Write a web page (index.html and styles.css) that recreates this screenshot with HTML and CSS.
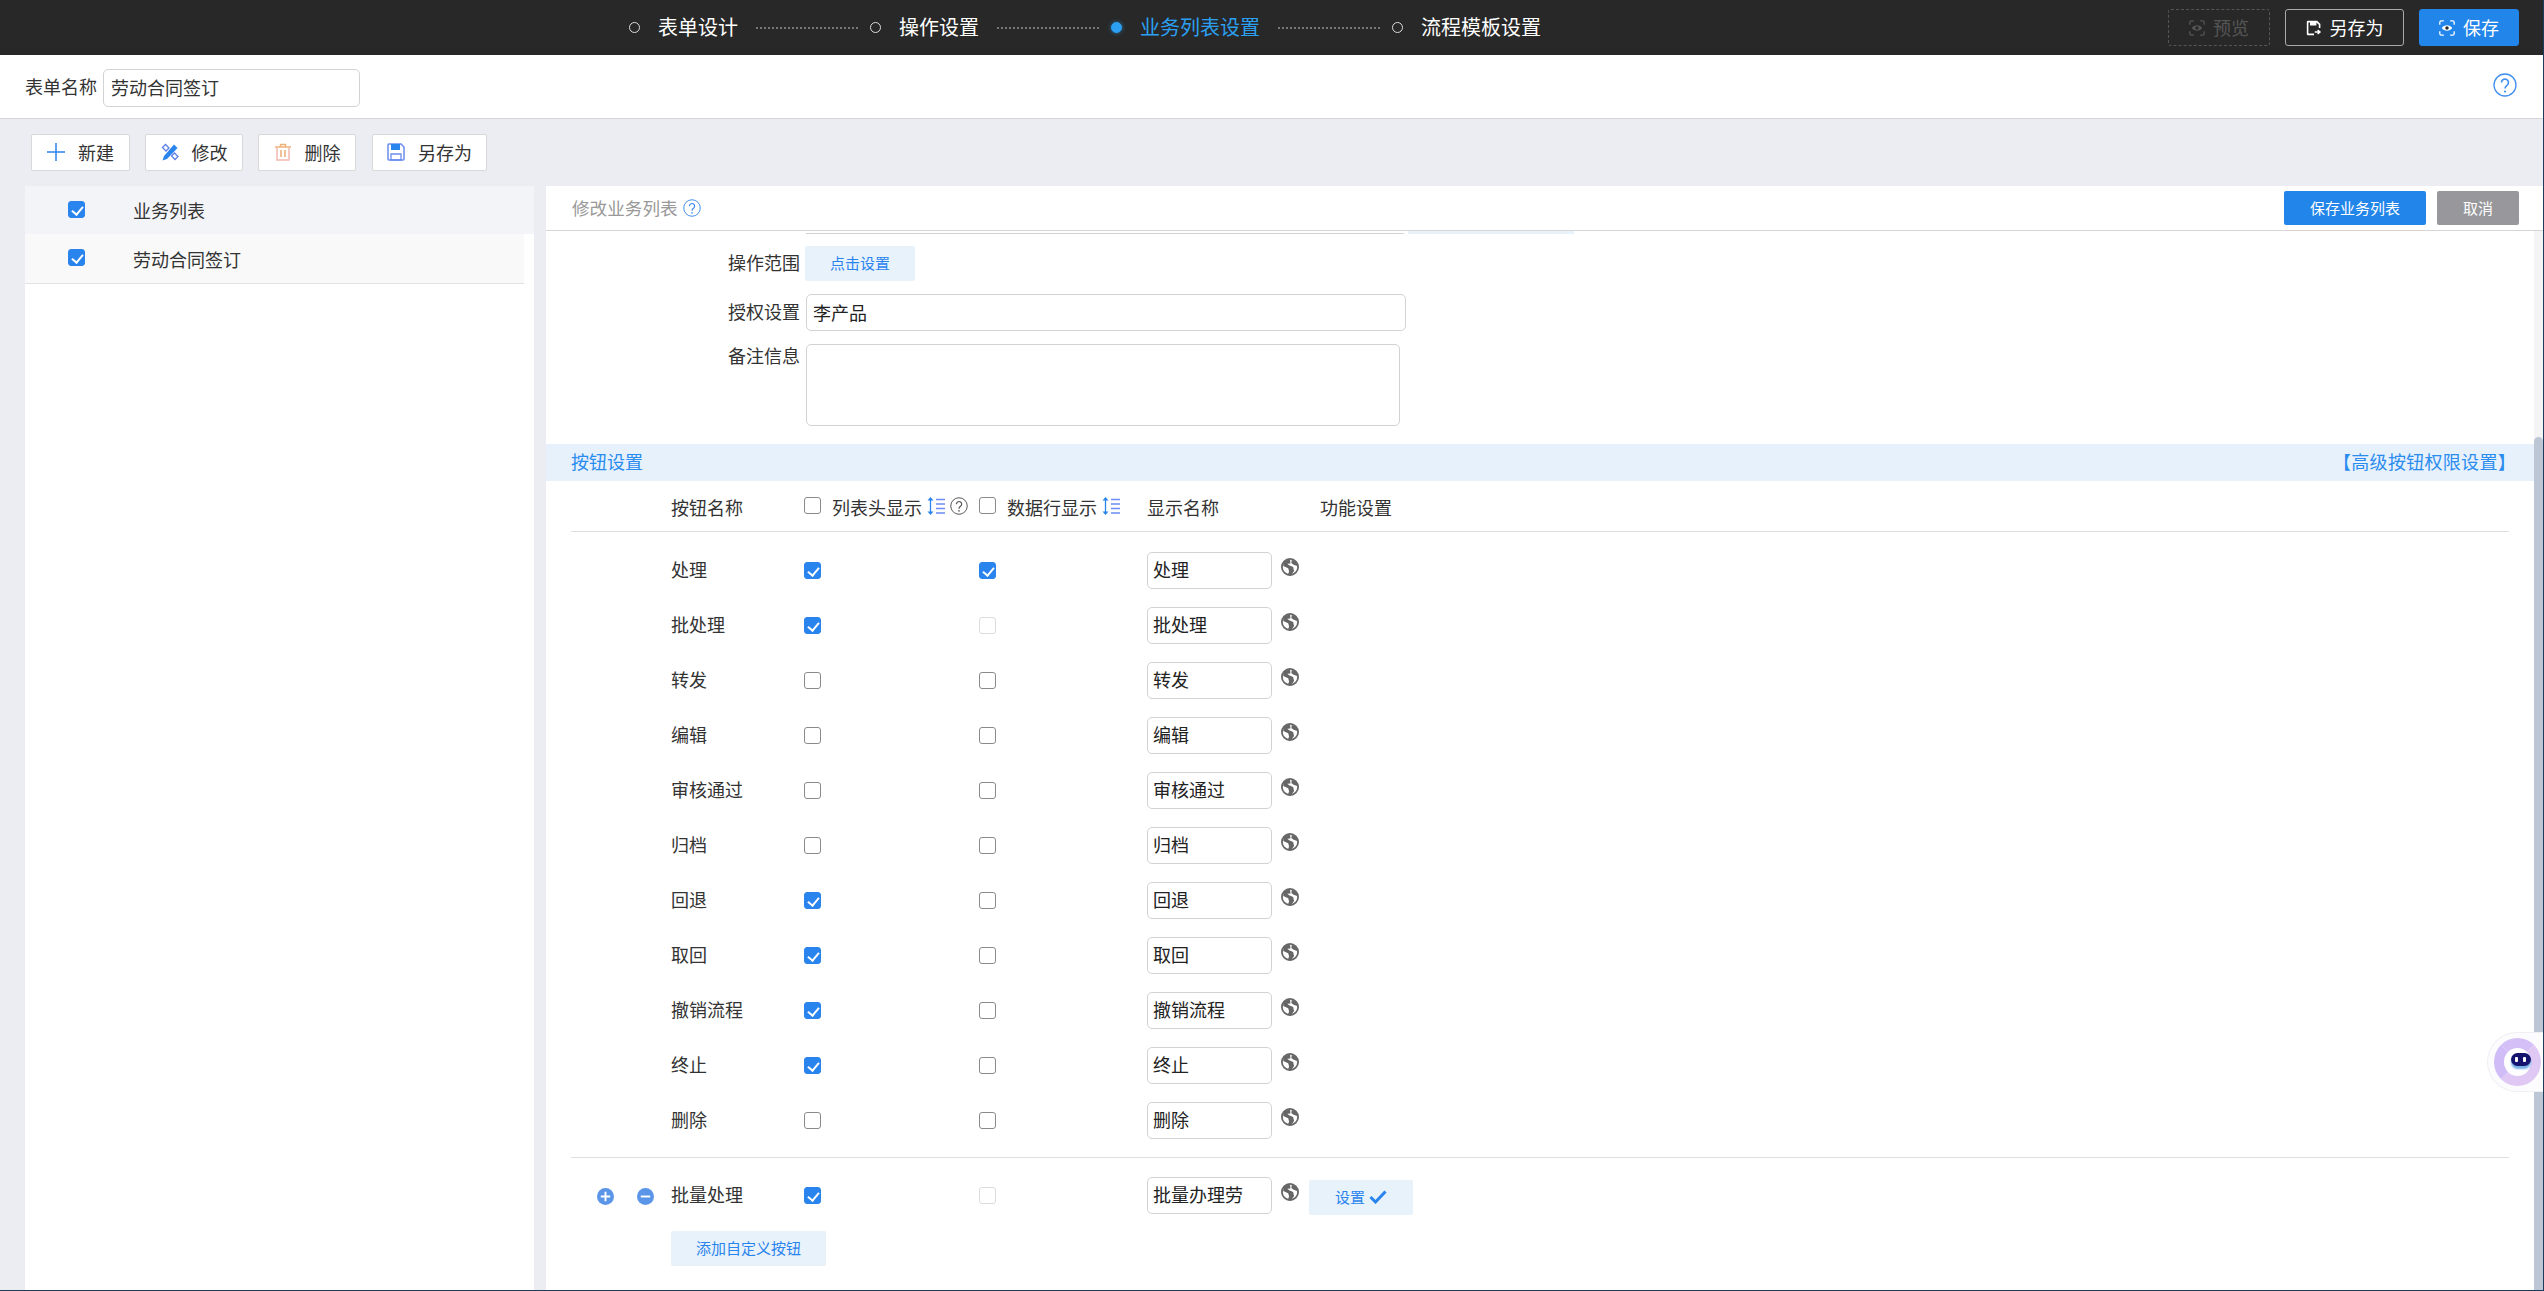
FILE: index.html
```html
<!DOCTYPE html>
<html lang="zh-CN">
<head>
    <meta charset="UTF-8">
    <title>表单设计</title>
    <link rel="stylesheet" href="styles.css">
</head>
<body>
    <svg class="icon-defs" width="0" height="0">
        <symbol id="i-eye" viewBox="0 0 20 20">
            <path d="M1 6V3a2 2 0 0 1 2-2h3M14 1h3a2 2 0 0 1 2 2v3M19 14v3a2 2 0 0 1-2 2h-3M6 19H3a2 2 0 0 1-2-2v-3" fill="none" stroke="currentColor" stroke-width="1.6"/>
            <path d="M3.5 10c3-4.6 10-4.6 13 0-3 4.6-10 4.6-13 0z" fill="currentColor"/>
            <circle cx="10" cy="10" r="2.2" fill="#282828"/>
        </symbol>
        <symbol id="i-saveas" viewBox="0 0 20 20">
            <path d="M1 2.500A1.500 1.500 0 0 1 2.500 1H14l4 4v5h-2V6l-3-3v4H5V3H3v14h7v2H2.500A1.500 1.500 0 0 1 1 17.500z" fill="currentColor"/>
            <path d="M11 15h5.500M14.500 12.500l3 2.500-3 2.500" fill="none" stroke="currentColor" stroke-width="1.800"/>
        </symbol>
        <symbol id="i-globe" viewBox="0 0 20 20">
            <circle cx="10" cy="10" r="9" fill="#fff" stroke="#666" stroke-width="2"/>
            <path d="M10 1 3 4l-.5 5 5.500 2.500 1 3.500-1.500 4 3.500.5 3.500-5-1-4.500-4.500-2L7 6.500 10.500 6zM12 2l-.5 3.500L14 7.500l4 1.500-.5-4.500z" fill="#666"/>
        </symbol>
        <symbol id="i-sort" viewBox="0 0 18 18">
            <path d="M3.500 2v14" fill="none" stroke="#2a84ee" stroke-width="1.300"/>
            <path d="M3.500 0l3 3.500h-6zM3.500 18l3-3.500h-6z" fill="#2a84ee"/>
            <path d="M9 2.500h9M9 7h9M9 11.500h9M9 16h9" fill="none" stroke="#6b8cf0" stroke-width="1.300"/>
        </symbol>
        <symbol id="i-help" viewBox="0 0 24 24">
            <circle cx="12" cy="12" r="11" fill="none" stroke="currentColor" stroke-width="1.300"/>
            <path d="M8.500 9.500a3.500 3.500 0 1 1 5.500 2.900c-1.300.9-2 1.600-2 3.100" fill="none" stroke="currentColor" stroke-width="1.600"/>
            <circle cx="12" cy="18.500" r="1.100" fill="currentColor"/>
        </symbol>
    </svg>

    <header class="topbar">
        <div class="steps">
            <span class="step"><i class="step-dot"></i>表单设计</span>
            <span class="step-line"></span>
            <span class="step"><i class="step-dot"></i>操作设置</span>
            <span class="step-line"></span>
            <span class="step active"><i class="step-dot"></i>业务列表设置</span>
            <span class="step-line"></span>
            <span class="step"><i class="step-dot"></i>流程模板设置</span>
        </div>
        <div class="top-actions">
            <button class="top-btn preview"><svg class="top-icon"><use href="#i-eye"/></svg>预览</button>
            <button class="top-btn saveas"><svg class="top-icon"><use href="#i-saveas"/></svg>另存为</button>
            <button class="top-btn save"><svg class="top-icon"><use href="#i-eye"/></svg>保存</button>
        </div>
    </header>

    <div class="form-bar">
        <label class="form-label">表单名称</label>
        <input class="text-input form-name" value="劳动合同签订">
        <svg class="form-help"><use href="#i-help"/></svg>
    </div>

    <main class="workspace">
        <div class="toolbar">
            <button class="tool-btn w-new">
                <svg class="tool-icon" viewBox="0 0 18 18"><path d="M9 0v18M0 9h18" stroke="#2a84ee" stroke-width="1.500"/></svg>新建
            </button>
            <button class="tool-btn w-edit">
                <svg class="tool-icon" viewBox="0 0 18 18">
                    <path d="M3 13 13 1.500l3.500 3.500L6 16l-4.500 1.500z" fill="#2a84ee"/>
                    <path d="M1.500 4.500l3-3L8 5 5 8zM10.500 13l3-3 3.500 3.500-3 3z" fill="none" stroke="#5b7fe6" stroke-width="1.300"/>
                </svg>修改
            </button>
            <button class="tool-btn w-edit">
                <svg class="tool-icon" viewBox="0 0 18 18">
                    <path d="M1 4h16M6.500 4V1.500h5V4" fill="none" stroke="#f0b27a" stroke-width="1.500"/>
                    <path d="M3 4.500V17h12V4.500" fill="none" stroke="#f5b8b0" stroke-width="1.500"/>
                    <path d="M7 7v7M11 7v7" stroke="#e8a060" stroke-width="1.300"/>
                </svg>删除
            </button>
            <button class="tool-btn w-saveas">
                <svg class="tool-icon" viewBox="0 0 18 18">
                    <path d="M1 2a1 1 0 0 1 1-1h12l3 3v12a1 1 0 0 1-1 1H2a1 1 0 0 1-1-1z" fill="none" stroke="#6b8cf0" stroke-width="1.500"/>
                    <path d="M4 1h9v6H4z" fill="#2a84ee"/>
                    <path d="M4 11h10v6H4z" fill="none" stroke="#6b8cf0" stroke-width="1.300"/>
                </svg>另存为
            </button>
        </div>

        <div class="columns">
            <aside class="list-panel">
                <div class="list-head"><span class="cb on"></span><span>业务列表</span></div>
                <div class="list-row"><span class="cb on"></span><span>劳动合同签订</span></div>
            </aside>

            <section class="edit-panel">
                <div class="edit-head">
                    <span class="edit-title">修改业务列表</span>
                    <svg class="edit-help"><use href="#i-help"/></svg>
                    <button class="head-btn primary">保存业务列表</button>
                    <button class="head-btn grey">取消</button>
                </div>
                <div class="edit-scroll">
                    <div class="edit-body">
                        <div class="peek"><span class="peek-input"></span><span class="peek-btn"></span></div>

                        <div class="field f-range">
                            <label class="field-label">操作范围</label>
                            <button class="light-btn range-btn">点击设置</button>
                        </div>
                        <div class="field f-auth">
                            <label class="field-label">授权设置</label>
                            <input class="text-input auth-input" value="李产品">
                        </div>
                        <div class="field f-note">
                            <label class="field-label">备注信息</label>
                            <textarea class="text-input note-input"></textarea>
                        </div>

                        <div class="band">
                            <span>按钮设置</span>
                            <a class="band-link">【高级按钮权限设置】</a>
                        </div>

                        <div class="btn-head">
                            <span class="col-name">按钮名称</span>
                            <span class="col-head">
                                <span class="cb"></span><span class="head-text">列表头显示</span>
                                <svg class="sort-icon"><use href="#i-sort"/></svg>
                                <svg class="q-icon"><use href="#i-help"/></svg>
                            </span>
                            <span class="col-head">
                                <span class="cb"></span><span class="head-text">数据行显示</span>
                                <svg class="sort-icon"><use href="#i-sort"/></svg>
                            </span>
                            <span class="col-show">显示名称</span>
                            <span>功能设置</span>
                        </div>

                        <div id="rows" class="btn-rows"></div>

                        <div class="custom-rows">
                            <div class="btn-row">
                                <span class="row-ops">
                                    <svg class="op-icon" viewBox="0 0 18 18"><circle cx="9" cy="9" r="9" fill="#5b95e8"/><path d="M9 4v10M4 9h10" stroke="#fff" stroke-width="2"/></svg>
                                    <svg class="op-icon" viewBox="0 0 18 18"><circle cx="9" cy="9" r="9" fill="#5b95e8"/><path d="M4 9h10" stroke="#fff" stroke-width="2"/></svg>
                                </span>
                                <span class="col-name">批量处理</span>
                                <span class="col-cb"><span class="cb on"></span></span>
                                <span class="col-cb"><span class="cb off"></span></span>
                                <input class="text-input show-input" value="批量办理劳动合同">
                                <svg class="globe"><use href="#i-globe"/></svg>
                                <button class="light-btn set-btn">设置<svg class="tick" viewBox="0 0 18 14"><path d="M1.500 7 6.500 12 16.500 1.500" fill="none" stroke="#2a84ee" stroke-width="3"/></svg></button>
                            </div>
                            <button class="light-btn add-btn">添加自定义按钮</button>
                        </div>
                    </div>
                    <div class="scrollbar"><div class="scroll-thumb"></div></div>
                </div>
            </section>
        </div>
    </main>

    <div class="robot"><span class="robot-ring"><span class="robot-face"><i></i><i></i></span></span></div>

    <script>
        // 按钮设置的数据行: [名称, 列表头, 数据行] on / "" / off(禁用)
        var buttons = [
            ['处理', 'on', 'on'],
            ['批处理', 'on', 'off'],
            ['转发', '', ''],
            ['编辑', '', ''],
            ['审核通过', '', ''],
            ['归档', '', ''],
            ['回退', 'on', ''],
            ['取回', 'on', ''],
            ['撤销流程', 'on', ''],
            ['终止', 'on', ''],
            ['删除', '', '']
        ];

        var rows = document.getElementById('rows');
        buttons.forEach(function (b) {
            var row = document.createElement('div');
            row.className = 'btn-row';
            row.innerHTML =
                '<span class="row-ops"></span>' +
                '<span class="col-name">' + b[0] + '</span>' +
                '<span class="col-cb"><span class="cb ' + b[1] + '"></span></span>' +
                '<span class="col-cb"><span class="cb ' + b[2] + '"></span></span>' +
                '<input class="text-input show-input" value="' + b[0] + '">' +
                '<svg class="globe"><use href="#i-globe"/></svg>';
            rows.appendChild(row);
        });
    </script>
</body>
</html>
```

FILE: styles.css
```css
* {
    box-sizing: border-box;
}

html, body {
    height: 100%;
}

body {
    margin: 0;
    display: flex;
    flex-direction: column;
    overflow: hidden;
    font-family: "Noto Sans CJK SC", "Liberation Sans", sans-serif;
    font-size: 18px;
    color: #333;
    background: #ecedf2;
    border-right: 1px solid #1d3b5a;
    border-bottom: 1px solid #1d3b5a;
}

button, input, textarea {
    font-family: inherit;
    margin: 0;
}

.icon-defs {
    position: absolute;
}

/* Top bar */
.topbar {
    flex: none;
    height: 55px;
    display: flex;
    align-items: center;
    background: #282828;
    color: #fff;
}

.steps {
    display: flex;
    align-items: center;
    margin-left: 629px;
}

.step {
    display: flex;
    align-items: center;
    padding-bottom: 2px;
    font-size: 20px;
    line-height: 53px;
    white-space: nowrap;
}

.step-dot {
    width: 11px;
    height: 11px;
    margin: 2px 18px 0 0;
    border: 1.5px solid #ddd;
    border-radius: 50%;
}

.step.active {
    color: #2ba0f2;
}

.step.active .step-dot {
    background: #2ba0f2;
    border-color: #2ba0f2;
    box-shadow: 0 0 4px rgba(43, 160, 242, 0.6);
}

.step-line {
    width: 102px;
    margin: 0 12px 0 18px;
    border-top: 2px dotted #777;
}

.top-actions {
    display: flex;
    gap: 15px;
    margin-left: auto;
    margin-right: 24px;
}

.top-btn {
    height: 37px;
    display: flex;
    align-items: center;
    justify-content: center;
    gap: 8px;
    padding: 0 0 2px;
    font-size: 18px;
    color: #fff;
    background: none;
    border: 1px solid #aaa;
    border-radius: 3px;
}

.top-icon {
    width: 16px;
    height: 16px;
    margin-top: 2px;
}

.top-btn.preview {
    width: 102px;
    color: #555;
    border: 1px dashed #555;
}

.top-btn.saveas {
    width: 119px;
}

.top-btn.save {
    width: 100px;
    background: #2185e9;
    border-color: #2185e9;
}

/* Form name bar */
.form-bar {
    flex: none;
    height: 64px;
    display: flex;
    align-items: center;
    padding: 0 26px 0 25px;
    background: #fff;
    border-bottom: 1px solid #d5d5d5;
}

.form-label {
    margin-right: 6px;
    margin-top: -2px;
}

.text-input {
    font-size: 18px;
    color: #333;
    background: #fff;
    border: 1px solid #d2d2d2;
    border-radius: 5px;
    outline: none;
}

.form-name {
    width: 257px;
    height: 38px;
    margin-top: 3px;
    padding: 0 7px 2px;
}

.form-help {
    width: 24px;
    height: 24px;
    margin-left: auto;
    margin-top: -3px;
    color: #3f8ef0;
}

/* Workspace */
.workspace {
    flex: 1;
    min-height: 0;
    display: flex;
    flex-direction: column;
}

.toolbar {
    flex: none;
    display: flex;
    gap: 15px;
    padding: 15px 0 15px 31px;
}

.tool-btn {
    height: 37px;
    display: flex;
    align-items: center;
    justify-content: center;
    gap: 13px;
    padding: 0 0 1px;
    font-size: 18px;
    color: #333;
    background: #fff;
    border: 1px solid #d8d8d8;
    border-radius: 2px;
}

.tool-icon {
    width: 18px;
    height: 18px;
}

.w-new {
    width: 99px;
}

.w-edit {
    width: 98px;
}

.w-saveas {
    width: 115px;
    margin-left: 1px;
}

.columns {
    flex: 1;
    min-height: 0;
    display: flex;
    gap: 12px;
    padding-left: 25px;
}

/* Left list */
.list-panel {
    flex: none;
    width: 509px;
    background: #fff;
}

.list-head, .list-row {
    display: flex;
    align-items: center;
}

.list-head {
    height: 48px;
    background: #f3f4f8;
}

.list-row {
    width: 499px;
    height: 50px;
    background: #f9f9f9;
    border-bottom: 1px solid #e2e2e2;
}

.list-panel .cb {
    margin: -2px 48px 0 43px;
}

/* Check boxes */
.cb {
    position: relative;
    flex: none;
    display: inline-block;
    width: 17px;
    height: 17px;
    background: #fff;
    border: 1px solid #8a8a8a;
    border-radius: 3px;
}

.cb.on {
    background: #2a84ee;
    border-color: #2a84ee;
}

.cb.on::after {
    content: "";
    position: absolute;
    left: 5px;
    top: 2px;
    width: 5px;
    height: 9px;
    border: solid #fff;
    border-width: 0 2px 2px 0;
    transform: rotate(40deg);
}

.cb.off {
    border-color: #dcdcdc;
}

/* Right panel */
.edit-panel {
    flex: 1;
    min-width: 0;
    display: flex;
    flex-direction: column;
    background: #fff;
}

.edit-head {
    flex: none;
    height: 45px;
    display: flex;
    align-items: center;
    padding: 0 24px 0 26px;
    border-bottom: 1px solid #d5d5d5;
}

.edit-title {
    color: #999;
    font-size: 17.6px;
    margin-top: -1px;
}

.edit-help {
    width: 18px;
    height: 18px;
    margin-left: 5px;
    color: #3f8ef0;
}

.head-btn {
    height: 34px;
    padding: 0 0 2px;
    font-size: 15px;
    color: #fff;
    border: none;
    border-radius: 2px;
}

.head-btn.primary {
    width: 142px;
    margin-left: auto;
    margin-right: 11px;
    background: #2185e9;
}

.head-btn.grey {
    width: 82px;
    background: #98989c;
}

.edit-scroll {
    flex: 1;
    min-height: 0;
    display: flex;
    overflow: hidden;
}

.edit-body {
    flex: 1;
    min-width: 0;
}

.peek {
    height: 3px;
    display: flex;
    overflow: hidden;
    padding-left: 260px;
}

.peek-input {
    width: 598px;
    height: 3px;
    border-bottom: 1px solid #d2d2d2;
}

.peek-btn {
    width: 166px;
    height: 3px;
    margin-left: 4px;
    background: #e8f2fb;
}

.field {
    display: flex;
    padding-left: 182px;
}

.field-label {
    width: 77px;
    flex: none;
    white-space: nowrap;
}

.f-range {
    align-items: center;
    padding-top: 12px;
}

.f-auth {
    align-items: center;
    padding-top: 13px;
}

.f-range .field-label, .f-auth .field-label {
    margin-top: -4px;
}

.f-note {
    padding-top: 13px;
}

.f-note .field-label {
    line-height: 22px;
}

.light-btn {
    padding: 0 0 2px;
    font-size: 15px;
    color: #2a84ee;
    background: #e8f2fb;
    border: none;
    border-radius: 2px;
}

.range-btn {
    width: 110px;
    height: 35px;
}

.auth-input {
    width: 600px;
    height: 37px;
    margin-left: 1px;
    padding: 0 6px 2px;
    color: #222;
}

.note-input {
    display: block;
    width: 594px;
    height: 82px;
    margin-left: 1px;
    resize: none;
}

.band {
    height: 37px;
    margin-top: 18px;
    display: flex;
    align-items: center;
    justify-content: space-between;
    padding: 0 18px 3px 25px;
    color: #2a8cef;
    background: #e6f1fc;
}

.band-link {
    white-space: nowrap;
    letter-spacing: 0.3px;
}

/* Button table */
.btn-head, .btn-row {
    display: flex;
    align-items: center;
    margin: 0 25px;
}

.btn-head {
    height: 51px;
    padding: 2px 0 0 100px;
    border-bottom: 1px solid #dedede;
    white-space: nowrap;
}

.col-name {
    width: 133px;
    flex: none;
}

.col-head {
    display: flex;
    align-items: center;
}

.col-head:nth-child(2) {
    width: 175px;
}

.col-head:nth-child(3) {
    width: 168px;
}

.col-head .cb {
    margin-top: -4px;
}

.head-text {
    margin-left: 11px;
}

.sort-icon {
    width: 18px;
    height: 18px;
    margin: -2px 0 0 5px;
}

.q-icon {
    width: 18px;
    height: 18px;
    margin: -2px 0 0 5px;
    color: #555;
}

.col-show {
    width: 173px;
}

.btn-rows {
    padding: 20px 0 18px;
    display: flex;
    flex-direction: column;
    gap: 18px;
}

.btn-row {
    height: 37px;
}

.btn-row .col-name {
    margin-top: -3px;
}

.row-ops {
    width: 100px;
    flex: none;
    display: flex;
    gap: 23px;
    padding: 3px 0 0 26px;
}

.op-icon {
    width: 17px;
    height: 17px;
}

.col-cb {
    width: 175px;
    flex: none;
    display: flex;
}

.col-cb + .col-cb {
    width: 168px;
}

.show-input {
    width: 125px;
    height: 37px;
    flex: none;
    padding: 0 28px 3px 5px;
    color: #222;
}

.globe {
    width: 18px;
    height: 18px;
    margin: -7px 0 0 9px;
}

.custom-rows {
    margin: 0 25px;
    padding-top: 18px;
    border-top: 1px solid #dedede;
}

.custom-rows .btn-row {
    margin: 0;
    height: 38px;
}

.set-btn {
    width: 104px;
    height: 35px;
    margin-left: 10px;
    margin-top: 5px;
    display: flex;
    align-items: center;
    justify-content: center;
    gap: 4px;
}

.tick {
    width: 18px;
    height: 14px;
}

.add-btn {
    display: block;
    width: 155px;
    height: 35px;
    margin: 17px 0 0 100px;
}

/* Scrollbar */
.scrollbar {
    flex: none;
    width: 9px;
    padding-top: 206px;
    background: #f4f4f4;
}

.scroll-thumb {
    height: 100%;
    background: #bcc6d5;
    border-radius: 5px 5px 0 0;
}

/* Floating robot */
.robot {
    position: absolute;
    left: 2487px;
    top: 1032px;
    width: 56px;
    height: 60px;
    display: flex;
    align-items: center;
    padding-left: 6px;
    background: #fcfcfe;
    border: 1px solid #f0f0f4;
    border-right: none;
    border-radius: 30px 0 0 30px;
}

.robot-ring {
    width: 47px;
    height: 48px;
    display: flex;
    align-items: center;
    justify-content: center;
    background: #fff;
    border: 10px solid #e0c8f5;
    border-left-color: #d0bcf6;
    border-top-color: #d4bff6;
    border-radius: 50%;
}

.robot-face {
    flex: none;
    width: 20px;
    height: 13px;
    margin: -5px -6px 0 0;
    display: flex;
    align-items: center;
    justify-content: center;
    gap: 5px;
    background: #14146e;
    border-radius: 7px;
    box-shadow: 0 3px 2px rgba(60, 140, 220, 0.7);
}

.robot-face i {
    width: 3px;
    height: 5px;
    background: #fff;
    border-radius: 1px;
}
```
